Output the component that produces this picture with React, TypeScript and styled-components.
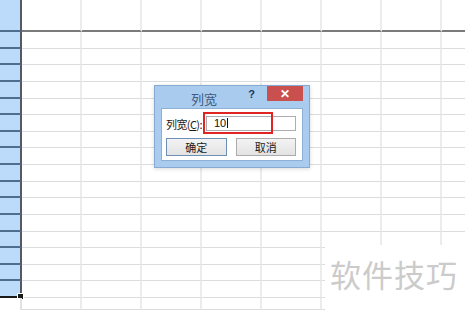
import React from 'react';
import styled, { createGlobalStyle } from 'styled-components';

const GlobalStyle = createGlobalStyle`
  html, body {
    margin: 0;
    padding: 0;
    background: #ffffff;
  }
  body {
    font-family: "Noto Sans CJK SC", "Noto Sans", sans-serif;
  }
`;

const Page = styled.div`
  position: relative;
  width: 465px;
  height: 310px;
  overflow: hidden;
  background: #ffffff;
`;

const SheetGrid = styled.div`
  display: grid;
  grid-template-columns: 22px repeat(8, 60px);
  grid-template-rows: 32px repeat(16, 16.625px) 1fr;
  height: 310px;
`;

const Cell = styled.div<{ $first?: boolean }>`
  box-sizing: border-box;
  border-right: 2px solid #ececec;
  border-bottom: ${({ $first }) => ($first ? '2px solid #7a7a7a' : '1px solid #dcdcdc')};
`;

const RowHead = styled.div<{ $last?: boolean; $tail?: boolean }>`
  position: relative;
  box-sizing: border-box;
  background: ${({ $tail }) => ($tail ? '#ffffff' : '#bcdafa')};
  border-right: 2px solid ${({ $tail }) => ($tail ? '#e2e2e2' : '#555a60')};
  border-bottom: ${({ $last, $tail }) =>
    $tail ? 'none' : $last ? '2px solid #1a1a1a' : '2px solid #4f6d8e'};
`;

const FillHandle = styled.span`
  position: absolute;
  right: -4px;
  bottom: -4px;
  width: 5px;
  height: 5px;
  background: #1a1a1a;
  border: 1px solid #ffffff;
`;

const Dialog = styled.div`
  position: absolute;
  left: 154px;
  top: 85px;
  width: 156px;
  height: 83px;
  box-sizing: border-box;
  display: flex;
  flex-direction: column;
  padding: 0 6px 6px 6px;
  background: #a9cbee;
  border: 1px solid #86aad2;
  box-shadow: 0 1px 4px rgba(0, 0, 0, 0.15);
`;

const TitleBar = styled.div`
  height: 22px;
  display: flex;
  align-items: center;
  position: relative;
`;

const Title = styled.div`
  flex: 1;
  text-align: center;
  padding-right: 56px;
  font-size: 13px;
  color: #3e5b80;
  padding-top: 2px;
`;

const Help = styled.div`
  position: absolute;
  right: 48px;
  top: 2px;
  font-family: "Liberation Sans", Arial, sans-serif;
  font-weight: bold;
  font-size: 11px;
  color: #1e3556;
`;

const CloseButton = styled.div`
  position: absolute;
  right: 0px;
  top: 0px;
  width: 36px;
  height: 15px;
  background: #c9504e;
  color: #ffffff;
  display: flex;
  align-items: center;
  justify-content: center;
  font-family: "Liberation Sans", Arial, sans-serif;
  font-weight: bold;
  font-size: 12px;
`;

const Client = styled.div`
  flex: 1;
  position: relative;
  background: #ffffff;
  border: 1px solid #8eb0d4;
  box-sizing: border-box;
  display: flex;
  flex-direction: column;
  padding: 7px 6px 0 4px;
  gap: 7px;
`;

const FieldRow = styled.div`
  display: flex;
  align-items: center;
  height: 15px;
`;

const Label = styled.div`
  width: 40px;
  font-size: 11px;
  color: #1a1a1a;
  white-space: nowrap;
  letter-spacing: -0.6px;
`;

const Input = styled.div`
  flex: 1;
  height: 15px;
  box-sizing: border-box;
  border: 1px solid #abadb3;
  font-family: "Liberation Sans", Arial, sans-serif;
  font-size: 11px;
  line-height: 13px;
  padding-left: 7px;
  color: #111111;
`;

const Caret = styled.span`
  display: inline-block;
  width: 1px;
  height: 10px;
  background: #111111;
  vertical-align: -1px;
  margin-left: 1px;
`;

const Highlight = styled.div`
  position: absolute;
  left: 41px;
  top: 3px;
  width: 70px;
  height: 22px;
  box-sizing: border-box;
  border: 2px solid #e02424;
`;

const ButtonRow = styled.div`
  display: flex;
  gap: 9px;
`;

const Button = styled.div<{ $default?: boolean }>`
  width: 62px;
  height: 18px;
  box-sizing: border-box;
  border: 1px solid ${({ $default }) => ($default ? '#6d8fb5' : '#acacac')};
  background: linear-gradient(#f3f3f3, #e3e3e3);
  font-size: 11px;
  color: #1a1a1a;
  display: flex;
  align-items: center;
  justify-content: center;
`;

const Watermark = styled.div`
  position: absolute;
  left: 325px;
  top: 245px;
  right: 0;
  bottom: 0;
  background: #ffffff;
  font-size: 31px;
  color: #cbcbcb;
  padding: 6px 0 0 5px;
  letter-spacing: 1px;
  white-space: nowrap;
`;

const COLS = 8;
const ROWS = 18;

export default function App() {
  const rows = Array.from({ length: ROWS }, (_, i) => i);
  const cols = Array.from({ length: COLS }, (_, i) => i);

  return (
    <Page>
      <GlobalStyle />
      <SheetGrid>
        {rows.map((r) => (
          <React.Fragment key={r}>
            <RowHead $last={r === ROWS - 2} $tail={r === ROWS - 1}>
              {r === ROWS - 2 && <FillHandle />}
            </RowHead>
            {cols.map((c) => (
              <Cell key={c} $first={r === 0} />
            ))}
          </React.Fragment>
        ))}
      </SheetGrid>

      <Dialog>
        <TitleBar>
          <Title>列宽</Title>
          <Help>?</Help>
          <CloseButton>✕</CloseButton>
        </TitleBar>
        <Client>
          <FieldRow>
            <Label>
              列宽(<u>C</u>):
            </Label>
            <Input>
              10
              <Caret />
            </Input>
          </FieldRow>
          <ButtonRow>
            <Button $default>确定</Button>
            <Button>取消</Button>
          </ButtonRow>
          <Highlight />
        </Client>
      </Dialog>

      <Watermark>软件技巧</Watermark>
    </Page>
  );
}
